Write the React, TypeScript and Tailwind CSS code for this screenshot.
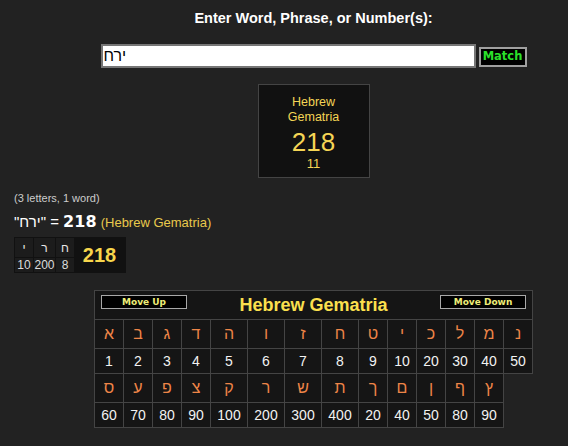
const colClass = [
  "w-[30px] border-l",
  "w-[29px]",
  "w-[29px]",
  "w-[29px]",
  "w-[37px]",
  "w-[37px]",
  "w-[37px]",
  "w-[37px]",
  "w-[29px]",
  "w-[29px]",
  "w-[29px]",
  "w-[29px]",
  "w-[29px]",
  "w-[29px]",
];

const rowA = ["א", "ב", "ג", "ד", "ה", "ו", "ז", "ח", "ט", "י", "כ", "ל", "מ", "נ"];
const valA = ["1", "2", "3", "4", "5", "6", "7", "8", "9", "10", "20", "30", "40", "50"];
const rowB = ["ס", "ע", "פ", "צ", "ק", "ר", "ש", "ת", "ך", "ם", "ן", "ף", "ץ"];
const valB = ["60", "70", "80", "90", "100", "200", "300", "400", "20", "40", "50", "80", "90"];

const word = [
  { ch: "י", v: "10" },
  { ch: "ר", v: "200" },
  { ch: "ח", v: "8" },
];

function LetterRow({ items }: { items: string[] }) {
  return (
    <div className="flex">
      {items.map((ch, i) => (
        <div
          key={i}
          className={`${colClass[i]} h-[29px] border-r border-b border-[#444] bg-[#151515] flex items-center justify-center text-[16px] text-[#ee8548]`}
        >
          {ch}
        </div>
      ))}
    </div>
  );
}

function ValueRow({ items }: { items: string[] }) {
  return (
    <div className="flex">
      {items.map((v, i) => (
        <div
          key={i}
          className={`${colClass[i]} h-[25px] border-r border-b border-[#444] bg-[#151515] flex items-center justify-center text-[14px] text-[#f2f2f2]`}
        >
          {v}
        </div>
      ))}
    </div>
  );
}

function MoveButton({ label }: { label: string }) {
  return (
    <button className="w-[86px] h-[14px] bg-black border border-[#a8a8a8] flex items-center justify-center font-['DejaVu_Sans',Verdana,sans-serif] font-bold text-[9px] leading-none text-[#eeee78]">
      {label}
    </button>
  );
}

export default function App() {
  return (
    <div className="w-[568px] h-[446px] overflow-hidden bg-[#222222] font-['Liberation_Sans',Arial,sans-serif]">
      <div className="w-[627px] flex flex-col items-center pt-[10px]">
        <h1 className="text-[14.5px] leading-[17px] font-bold text-white">Enter Word, Phrase, or Number(s):</h1>

        <div className="mt-[17px] flex items-center gap-[3px]">
          <input
            defaultValue="ירח"
            className="w-[375px] h-[24px] border-2 border-[#767676] bg-white pl-[1px] text-[16px] text-black outline-none font-['Liberation_Sans',Arial,sans-serif]"
          />
          <button className="w-[48px] h-[20px] mt-[2px] bg-black border-2 border-[#a0a0a0] flex items-center justify-center font-['DejaVu_Sans',Verdana,sans-serif] font-bold text-[11.5px] leading-none text-[#2be02b]">
            Match
          </button>
        </div>

        <div className="mt-[16px] w-[112px] h-[94px] border border-[#444] bg-[#111] flex flex-col items-center pt-[10px] text-[#f5d555]">
          <span className="text-[12.5px] leading-[15px]">Hebrew</span>
          <span className="text-[12.5px] leading-[15px]">Gematria</span>
          <span className="mt-[3px] text-[26px] leading-[28px]">218</span>
          <span className="text-[13px] leading-[15px]">11</span>
        </div>
      </div>

      <div className="pl-[14px] pt-[14px]">
        <p className="text-[11px] leading-[13px] text-[#cccccc]">(3 letters, 1 word)</p>
        <p className="mt-[7px] leading-[20px] text-[15px] text-white whitespace-nowrap">
          "<bdi>ירח</bdi>" ={" "}
          <span className="font-['DejaVu_Sans',Verdana,sans-serif] font-bold text-[16px]">218</span>{" "}
          <span className="text-[13px] text-[#e9c94c]">(Hebrew Gematria)</span>
        </p>

        <div className="mt-[4px] inline-flex bg-[#111] p-px">
          <div className="grid grid-cols-[18px_21px_18px] grid-rows-[19px_14px] gap-px">
            {word.map((w, i) => (
              <div key={"c" + i} className="bg-[#1c1c1c] flex items-center justify-center text-[12px] text-[#e8e8e8]">
                {w.ch}
              </div>
            ))}
            {word.map((w, i) => (
              <div key={"v" + i} className="bg-[#1c1c1c] flex items-center justify-center text-[12px] leading-none text-[#dddddd]">
                {w.v}
              </div>
            ))}
          </div>
          <div className="w-[51px] flex items-center justify-center font-bold text-[20px] text-[#f7d64c]">218</div>
        </div>
      </div>

      <div className="w-[627px] flex justify-center mt-[17px]">
        <div className="w-[439px]">
          <div className="h-[30px] border border-[#444] bg-[#151515] flex items-start justify-between px-[6px] pt-[4px]">
            <MoveButton label="Move Up" />
            <span className="text-[18px] leading-[21px] font-bold text-[#fbe04e]">Hebrew Gematria</span>
            <MoveButton label="Move Down" />
          </div>
          <LetterRow items={rowA} />
          <ValueRow items={valA} />
          <LetterRow items={rowB} />
          <ValueRow items={valB} />
        </div>
      </div>
    </div>
  );
}
